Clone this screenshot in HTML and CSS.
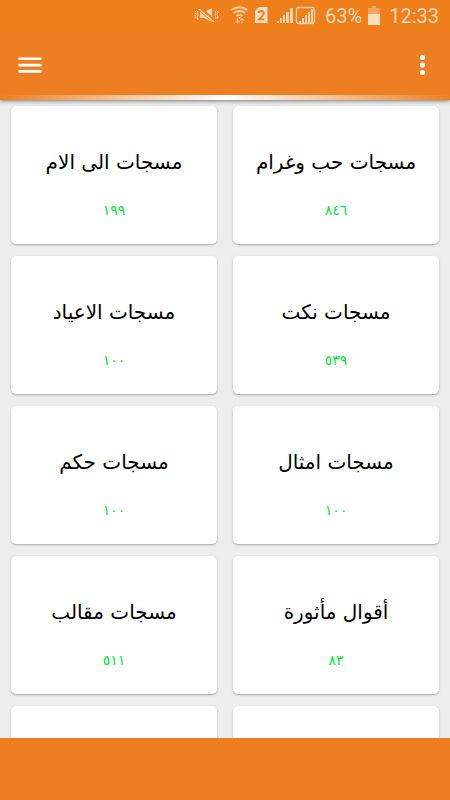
FILE: index.html
```html
<!DOCTYPE html>
<html lang="ar" dir="rtl">
<head>
<meta charset="utf-8">
<meta name="viewport" content="width=device-width, initial-scale=1">
<title>مسجات</title>
<link rel="stylesheet" href="styles.css">
</head>
<body>
<div class="screen">
  <header class="header">
    <div class="status" dir="ltr">
      <svg class="status-icons" width="122" height="24" viewBox="0 0 122 24" aria-hidden="true">
        <path fill="none" stroke="#fad2ac" stroke-width="1" d="M1 6.500l-1 2 1 2-1 2 1 2M3 7l-1 2 1 2-1 2 1 2-1 1M20 7l1 2-1 2 1 2-1 2M22 6.500l1 2-1 2 1 2-1 2"/>
        <path fill="#fad2ac" d="M5 8h4l8-4v14l-8-4H5z"/>
        <path d="M4 4l15 13" stroke="#ee7f1b" stroke-width="4"/>
        <path d="M4 5l15 13" stroke="#fad2ac" stroke-width="1.500"/>
        <path fill="none" stroke="#fad2ac" stroke-width="1.800" d="M36.500 6q8-5.500 16 0M39 9q5.500-4 11 0M41.500 12q3-2.200 6 0"/>
        <path fill="#fad2ac" d="M43 13h3l-1.500 2z"/>
        <path fill="none" stroke="#f7bb85" stroke-width="1.200" d="M42.500 19v-5M40.500 17l2 2 2-2M47 19.500v-5M45 16.500l2-2 2 2"/>
        <path fill="#fcdfc2" d="M64 3h8.500v16H60V7z"/>
        <path fill="none" stroke="#ee7f1b" stroke-width="1.800" d="M63.500 9q.300-2 2.700-2 2.600 0 2.600 2.300 0 1.700-4.800 6h5.500"/>
        <g fill="#fad2ac">
          <path d="M82 17h2v2h-2zM85 14h2v5h-2zM88 11h2v8h-2zM91 8h3v11h-3zM95 4h3v15h-3z"/>
          <path d="M104 17h2v2h-2zM107 14h2v5h-2zM110 11h2v8h-2zM113 8h2v11h-2zM116 5h2v14h-2z"/>
        </g>
        <rect x="101.500" y="3.500" width="18" height="16" rx="2" fill="none" stroke="#fad2ac" stroke-width="1.300"/>
      </svg>
      <span class="percent">63%</span>
      <svg class="battery" width="14" height="20" viewBox="0 0 14 20" aria-hidden="true">
        <path fill="#f4a45c" d="M5 0h4v2h4v7H1V2h4z"/>
        <path fill="#fcdfc2" d="M1 8h12v11H1z"/>
      </svg>
      <time class="clock">12:33</time>
    </div>
    <div class="toolbar" dir="ltr">
      <button class="icon-button" type="button" aria-label="القائمة">
        <svg width="24" height="24" viewBox="0 0 24 24"><path stroke="#fff" stroke-width="2.600" d="M0.500 5.800h23M0.500 12.100h23M0.500 18.400h23"/></svg>
      </button>
      <button class="icon-button" type="button" aria-label="المزيد">
        <svg width="18" height="24" viewBox="0 0 18 24" fill="#fff"><circle cx="8.500" cy="4.500" r="2.600"/><circle cx="8.500" cy="12" r="2.600"/><circle cx="8.500" cy="19.500" r="2.600"/></svg>
      </button>
    </div>
    <div class="glow"></div>
  </header>
  <main class="grid">
    <a class="card" href="#"><span class="title">مسجات حب وغرام</span><span class="count">٨٤٦</span></a>
    <a class="card" href="#"><span class="title">مسجات الى الام</span><span class="count">١٩٩</span></a>
    <a class="card" href="#"><span class="title">مسجات نكت</span><span class="count">٥٣٩</span></a>
    <a class="card" href="#"><span class="title">مسجات الاعياد</span><span class="count">١٠٠</span></a>
    <a class="card" href="#"><span class="title">مسجات امثال</span><span class="count">١٠٠</span></a>
    <a class="card" href="#"><span class="title">مسجات حكم</span><span class="count">١٠٠</span></a>
    <a class="card" href="#"><span class="title">أقوال مأثورة</span><span class="count">٨٣</span></a>
    <a class="card" href="#"><span class="title">مسجات مقالب</span><span class="count">٥١١</span></a>
    <div class="card"></div>
    <div class="card"></div>
  </main>
  <footer class="footer"></footer>
</div>
</body>
</html>
```

FILE: styles.css
```css
* {
  box-sizing: border-box;
}

body {
  margin: 0;
  background: #ededed;
  font-family: "DejaVu Sans", sans-serif;
}

.screen {
  display: flex;
  flex-direction: column;
  height: 100vh;
  overflow: hidden;
}

.header {
  position: relative;
  flex: none;
  background: #ed7f22;
  box-shadow: 0 1px 4px rgba(0, 0, 0, 0.5);
}

.status {
  display: flex;
  align-items: center;
  justify-content: flex-end;
  height: 32px;
  padding-right: 11px;
  background: #ee7f1b;
  color: #fcd9b8;
  font: 20px/32px Roboto, sans-serif;
}

.status-icons {
  margin-right: 8px;
}

.percent {
  margin-right: 5px;
}

.battery {
  margin-right: 8px;
}

.toolbar {
  display: flex;
  align-items: center;
  justify-content: space-between;
  height: 63px;
  padding: 2px 14px 0;
}

.icon-button {
  display: flex;
  padding: 4px;
  border: 0;
  background: none;
}

.glow {
  height: 5px;
  background: linear-gradient(to right, #ed7f22, #fff, #ed7f22);
}

.grid {
  display: grid;
  flex: 1;
  grid-template-columns: 1fr 1fr;
  grid-auto-rows: 138px;
  gap: 12px 16px;
  min-height: 0;
  padding: 6px 11px 0;
  overflow: hidden;
}

.card {
  display: flex;
  flex-direction: column;
  align-items: center;
  gap: 20px;
  padding-top: 40px;
  border-radius: 5px;
  background: #fff;
  box-shadow: 0 1px 2px rgba(0, 0, 0, 0.3);
  color: #000;
  text-decoration: none;
}

.title {
  font-size: 20px;
  line-height: 32px;
}

.count {
  color: #00e63c;
  font-size: 14px;
  line-height: 24px;
}

.footer {
  flex: none;
  height: 62px;
  background: #ed7f22;
}
```
